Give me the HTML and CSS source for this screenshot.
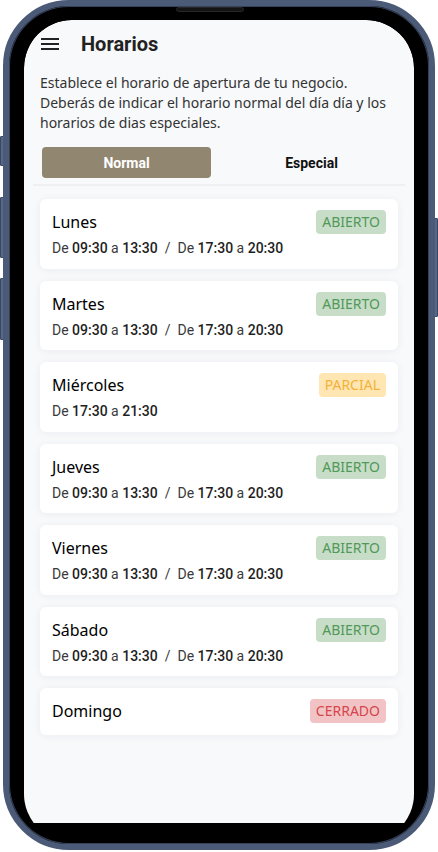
FILE: index.html
```html
<!DOCTYPE html>
<html lang="es">
<head>
<meta charset="utf-8">
<title>Horarios</title>
<link rel="stylesheet" href="styles.css">
</head>
<body>
<div class="device">
  <span class="btn btn-l1"></span>
  <span class="btn btn-l2"></span>
  <span class="btn btn-l3"></span>
  <span class="btn btn-r1"></span>
  <span class="band band-top"></span>
  <span class="band band-bottom"></span>
  <span class="band band-lt"></span>
  <span class="band band-rt"></span>
  <span class="band band-lb"></span>
  <span class="band band-rb"></span>
  <div class="phone">
    <span class="speaker"></span>
    <div class="screen-clip">
      <div class="screen">
        <header class="topbar">
          <svg class="menu" width="18" height="14" viewBox="0 0 18 14" aria-hidden="true">
            <rect x="0" y="1" width="18" height="2" fill="#222"/>
            <rect x="0" y="6" width="18" height="2" fill="#222"/>
            <rect x="0" y="11" width="18" height="2" fill="#222"/>
          </svg>
          <h1 class="title">Horarios</h1>
        </header>
        <p class="intro">Establece el horario de apertura de tu negocio. Deberás de indicar el horario normal del día día y los horarios de dias especiales.</p>
        <div class="tabs">
          <button class="tab tab-active">Normal</button>
          <button class="tab">Especial</button>
        </div>
        <div class="divider"></div>
        <div class="days">
          <div class="card">
            <div class="row"><span class="day">Lunes</span><span class="badge open">ABIERTO</span></div>
            <div class="hours">De <b>09:30</b> a <b>13:30</b><span class="sep">/</span>De <b>17:30</b> a <b>20:30</b></div>
          </div>
          <div class="card">
            <div class="row"><span class="day">Martes</span><span class="badge open">ABIERTO</span></div>
            <div class="hours">De <b>09:30</b> a <b>13:30</b><span class="sep">/</span>De <b>17:30</b> a <b>20:30</b></div>
          </div>
          <div class="card">
            <div class="row"><span class="day">Miércoles</span><span class="badge partial">PARCIAL</span></div>
            <div class="hours">De <b>17:30</b> a <b>21:30</b></div>
          </div>
          <div class="card">
            <div class="row"><span class="day">Jueves</span><span class="badge open">ABIERTO</span></div>
            <div class="hours">De <b>09:30</b> a <b>13:30</b><span class="sep">/</span>De <b>17:30</b> a <b>20:30</b></div>
          </div>
          <div class="card">
            <div class="row"><span class="day">Viernes</span><span class="badge open">ABIERTO</span></div>
            <div class="hours">De <b>09:30</b> a <b>13:30</b><span class="sep">/</span>De <b>17:30</b> a <b>20:30</b></div>
          </div>
          <div class="card">
            <div class="row"><span class="day">Sábado</span><span class="badge open">ABIERTO</span></div>
            <div class="hours">De <b>09:30</b> a <b>13:30</b><span class="sep">/</span>De <b>17:30</b> a <b>20:30</b></div>
          </div>
          <div class="card card-closed">
            <div class="row"><span class="day">Domingo</span><span class="badge closed">CERRADO</span></div>
          </div>
        </div>
      </div>
    </div>
  </div>
</div>
</body>
</html>
```
FILE: styles.css
```css
* { box-sizing: border-box; }
html, body { margin: 0; padding: 0; background: #ffffff; }
body { width: 438px; height: 852px; overflow: hidden; font-family: "Noto Sans", "Open Sans", sans-serif; }

.device { position: relative; width: 438px; height: 852px; padding: 0 3px; }

.phone {
  position: relative;
  width: 432px;
  height: 850px;
  border: 6px solid #4b5a77;
  border-radius: 66px;
  background: #000;
  padding: 14px 15px 21px;
  box-shadow: inset 0 0 0 1px #35405a;
}

.speaker {
  position: absolute;
  left: 167px; top: 1px;
  width: 68px; height: 5px;
  background: #141414;
  border: 1px solid #262626;
  border-radius: 3px;
}

.btn { position: absolute; background: #56678a; border: 1px solid #3c4860; border-radius: 1px; }
.btn-l1 { left: 0; top: 136px; width: 4px; height: 30px; }
.btn-l2 { left: 0; top: 197px; width: 4px; height: 61px; }
.btn-l3 { left: 0; top: 278px; width: 4px; height: 62px; }
.btn-r1 { right: 0; top: 218px; width: 4px; height: 99px; }

.band { position: absolute; background: #8a97ad; }
.band-top { left: 342px; top: 0; width: 6px; height: 6px; }
.band-bottom { left: 91px; bottom: 2px; width: 6px; height: 6px; }
.band-lt { left: 3px; top: 87px; width: 6px; height: 5px; }
.band-rt { right: 3px; top: 87px; width: 6px; height: 5px; }
.band-lb { left: 3px; top: 759px; width: 6px; height: 5px; }
.band-rb { right: 3px; top: 759px; width: 6px; height: 5px; }

.screen-clip {
  height: 803px;
  overflow: hidden;
  border-radius: 48px 48px 0 0;
}

.screen {
  height: 822px;
  background: #f8f9fb;
  border-radius: 48px;
  padding: 10px 16px 0;
}

.topbar { display: flex; align-items: center; height: 28px; padding-left: 1px; }
.menu { display: block; flex: none; }
.title {
  margin: 0 0 0 22px;
  font-family: Roboto, "Liberation Sans", sans-serif;
  font-weight: 700;
  font-size: 20px;
  line-height: 28px;
  color: #222;
}

.intro {
  margin: 15px 0 0;
  font-size: 14px;
  line-height: 20px;
  color: #333;
}

.tabs {
  display: grid;
  grid-template-columns: 1fr 1fr;
  gap: 16px;
  margin: 14px 2px 0;
}
.tab {
  height: 31px;
  border: 0;
  border-radius: 4px;
  background: transparent;
  font-family: Roboto, "Liberation Sans", sans-serif;
  font-weight: 700;
  font-size: 14px;
  color: #111;
  padding: 0;
}
.tab-active { background: #918670; color: #fff; }

.divider { height: 2px; margin: 6px -7px 0; background: #eff0f3; }

.days { display: flex; flex-direction: column; gap: 12px; margin-top: 13px; }

.card {
  background: #fff;
  border-radius: 6px;
  padding: 11px 12px 11.5px;
  box-shadow: 0 1px 8px rgba(30, 40, 60, 0.06);
}
.card-closed { padding-bottom: 12px; }

.row { display: flex; align-items: center; justify-content: space-between; height: 24px; }
.day { font-size: 16px; line-height: 24px; color: #000; }

.badge {
  height: 24px;
  padding: 0 6px;
  border-radius: 4px;
  font-size: 14px;
  line-height: 24px;
}
.open { background: #c7ddc7; color: #52985a; }
.partial { background: #ffe6b3; color: #f3b23a; }
.closed { background: #f2c3c5; color: #d5464c; }

.hours {
  margin-top: 5px;
  font-family: Roboto, "Liberation Sans", sans-serif;
  font-size: 14px;
  line-height: 18px;
  color: #3a3a3a;
}
.hours b { font-weight: 500; color: #1e1e1e; }
.sep { margin: 0 7px; }
```
